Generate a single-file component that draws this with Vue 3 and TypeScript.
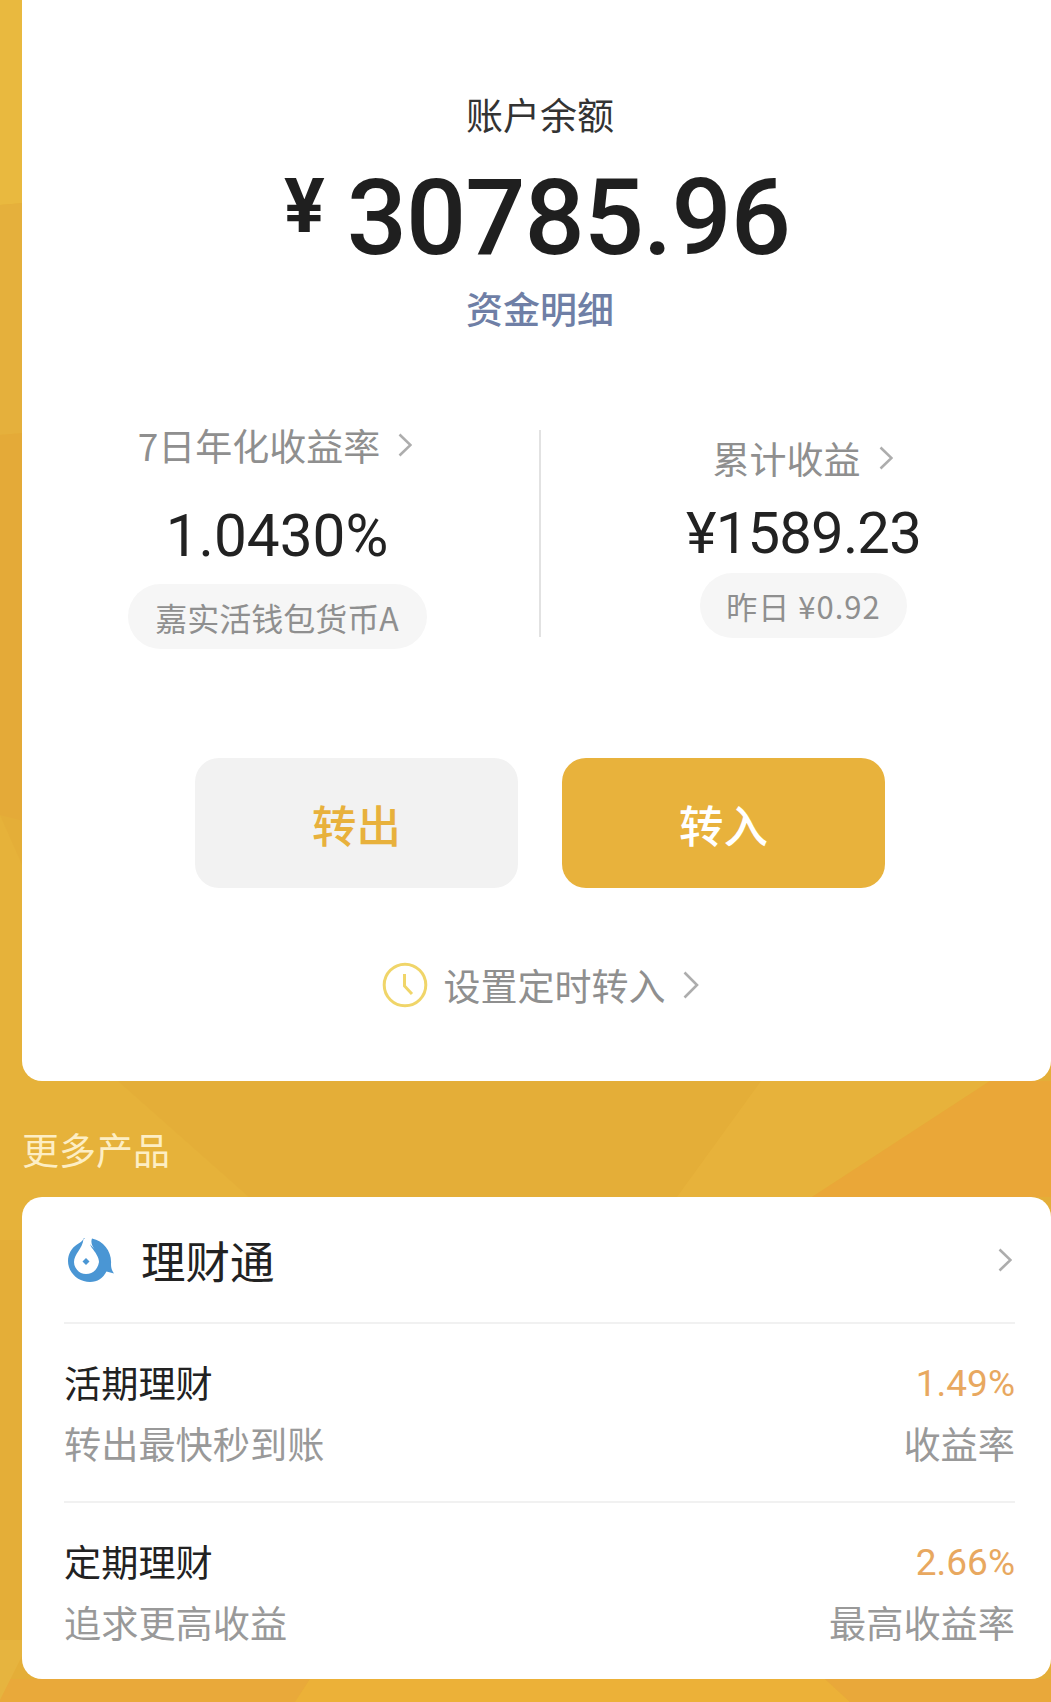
<script setup lang="ts">
interface Product {
  name: string
  desc: string
  rate: string
  rateLabel: string
}

const products: Product[] = [
  { name: '活期理财', desc: '转出最快秒到账', rate: '1.49%', rateLabel: '收益率' },
  { name: '定期理财', desc: '追求更高收益', rate: '2.66%', rateLabel: '最高收益率' },
]
</script>

<template>
  <div class="page">
    <svg class="backdrop" viewBox="0 0 1051 1702" preserveAspectRatio="none" aria-hidden="true">
      <rect width="1051" height="1702" fill="#e4ae38" />
      <polygon points="0,0 60,0 60,200 0,205" fill="#e9b93f" />
      <polygon points="0,205 60,200 60,430 0,435" fill="#e5b03c" />
      <polygon points="0,435 60,430 60,830 0,815" fill="#e4aa38" />
      <polygon points="0,815 118,1081 249,1197 249,1240 0,1240" fill="#e6b23a" />
      <polygon points="761,1081 990,1081 812,1197 677,1197" fill="#e7b23b" />
      <polygon points="990,1081 1051,1081 1051,1197 812,1197" fill="#eaa738" />
      <polygon points="0,1679 310,1679 295,1702 0,1702" fill="#e9a93a" />
      <polygon points="310,1679 825,1679 850,1702 295,1702" fill="#ecb138" />
      <polygon points="825,1679 1051,1679 1051,1702 850,1702" fill="#e9a83a" />
      <polygon points="0,1640 30,1640 0,1700" fill="#e6b43f" />
    </svg>

    <section class="balance-card">
      <div class="balance-label">账户余额</div>
      <div class="balance-amount">
        <span class="yen">¥</span>
        <span class="digits">30785.96</span>
      </div>
      <a class="details-link">资金明细</a>

      <div class="stats">
        <div class="stat stat-left">
          <div class="stat-title">
            <span>7日年化收益率</span>
            <svg class="chev" viewBox="0 0 14 24"><polyline points="1.5,1.5 12.5,12 1.5,22.5" /></svg>
          </div>
          <div class="stat-value">1.0430%</div>
          <div class="pill pill-fund">嘉实活钱包货币A</div>
        </div>
        <div class="stat-rule"></div>
        <div class="stat stat-right">
          <div class="stat-title">
            <span>累计收益</span>
            <svg class="chev" viewBox="0 0 14 24"><polyline points="1.5,1.5 12.5,12 1.5,22.5" /></svg>
          </div>
          <div class="stat-value stat-value-strong">¥1589.23</div>
          <div class="pill pill-yday">昨日 ¥0.92</div>
        </div>
      </div>

      <div class="actions">
        <button class="btn btn-out" type="button">转出</button>
        <button class="btn btn-in" type="button">转入</button>
      </div>

      <div class="schedule">
        <svg class="clock" viewBox="0 0 46 46">
          <circle cx="23" cy="23" r="20.8" />
          <polyline points="22.5,12 22.5,24 30,32" />
        </svg>
        <span class="schedule-text">设置定时转入</span>
        <svg class="chev chev-lg" viewBox="0 0 16 28"><polyline points="1.5,1.5 14,14 1.5,26.5" /></svg>
      </div>
    </section>

    <h2 class="more-title">更多产品</h2>

    <section class="product-card">
      <header class="product-head">
        <svg class="logo" viewBox="0 0 47 44">
          <path class="logo-blue" d="M16 0 C14.5 3.5 11.5 5 9 6.5 C3.5 10 0 16 0 23 C0 34.5 10 44 22 44 C29.5 44 35 40 38.5 33.5 L46 35.5 C43.5 32 43 29 43 26 C44 14 36 3 24 0.5 C22.5 4 24 8 26.5 11 Z" />
          <path class="logo-white" d="M15.5 1 L23 1 C21.5 5 22 7 24 10 C27 14 31 19 31 24 C30 31 25 36 18 36 C11 36 6 30 6 24 C6 16 14.5 11 15.5 1 Z" />
          <polygon class="logo-blue" points="18,20 21.5,23.5 18,27 14.5,23.5" />
        </svg>
        <span class="product-name">理财通</span>
        <svg class="chev chev-head" viewBox="0 0 14 24"><polyline points="1.5,1.5 12.5,12 1.5,22.5" /></svg>
      </header>

      <div v-for="p in products" :key="p.name" class="product-row">
        <div class="row-line">
          <span class="row-name">{{ p.name }}</span>
          <span class="row-rate">{{ p.rate }}</span>
        </div>
        <div class="row-line row-sub">
          <span>{{ p.desc }}</span>
          <span>{{ p.rateLabel }}</span>
        </div>
      </div>
    </section>
  </div>
</template>

<style scoped>
.page {
  position: relative;
  width: 1051px;
  height: 1702px;
  overflow: hidden;
  padding-left: 22px;
  box-sizing: border-box;
  font-family: "Noto Sans CJK SC", "Noto Sans", sans-serif;
  color: #222;
}

.backdrop {
  position: absolute;
  inset: 0;
  width: 100%;
  height: 100%;
}

.balance-card,
.more-title,
.product-card {
  position: relative;
}

.balance-card {
  height: 1081px;
  box-sizing: border-box;
  padding-top: 90px;
  background: #fff;
  border-radius: 0 0 20px 20px;
  display: flex;
  flex-direction: column;
}

.balance-label {
  height: 50px;
  line-height: 50px;
  font-size: 37px;
  text-align: center;
  color: #333;
  padding-left: 7px;
  margin-top: -1px;
  margin-bottom: 1px;
}

.balance-amount {
  display: flex;
  justify-content: center;
  align-items: flex-start;
  height: 108px;
  margin-top: 28px;
  padding-left: 1px;
  font-family: "Roboto", sans-serif;
  color: #1f1f1f;
}

.yen {
  font-size: 76px;
  line-height: 76px;
  font-weight: 700;
  margin-right: 22px;
}

.digits {
  font-size: 106px;
  line-height: 100px;
  font-weight: 500;
  letter-spacing: -1px;
}

.details-link {
  display: block;
  height: 50px;
  line-height: 50px;
  margin-top: 7px;
  padding-left: 7px;
  font-size: 37px;
  font-weight: 500;
  text-align: center;
  color: #6f7fa6;
}

.stats {
  display: grid;
  grid-template-columns: 510px 2px 1fr;
  column-gap: 10px;
  margin-top: 97px;
  height: 207px;
}

.stat {
  display: flex;
  flex-direction: column;
  align-items: center;
}

.stat-right {
  padding-left: 2px;
}

.stat-rule {
  width: 2px;
  height: 207px;
  margin-left: -3px;
  background: #e2e2e2;
}

.stat-title {
  display: flex;
  align-items: center;
  gap: 18px;
  height: 50px;
  line-height: 50px;
  font-size: 37px;
  color: #8f8f8f;
}

.stat-left .stat-title {
  margin-top: -10px;
  margin-right: 4px;
}

.stat-right .stat-title {
  margin-top: 3px;
  margin-right: 2px;
}

.stat-value {
  font-family: "Roboto", sans-serif;
  font-size: 58.5px;
  line-height: 70px;
  margin-top: 31px;
  color: #222;
}

.stat-right .stat-value {
  margin-top: 15px;
}

.stat-value-strong {
  font-size: 58px;
  letter-spacing: -0.8px;
}

.pill {
  border-radius: 33px;
  background: #f6f6f6;
  color: #8f8f8f;
  display: flex;
  align-items: center;
  justify-content: center;
  box-sizing: border-box;
}

.pill-fund {
  width: 299px;
  height: 65px;
  margin-top: 13px;
  font-size: 32px;
}

.pill-yday {
  width: 207px;
  height: 65px;
  margin-top: 5px;
  font-size: 31px;
  letter-spacing: 1px;
}

.chev {
  width: 14px;
  height: 24px;
  flex: none;
}

.chev polyline {
  fill: none;
  stroke: #adadad;
  stroke-width: 2.6;
}

.chev-lg {
  width: 16px;
  height: 28px;
  margin-left: 17px;
}

.actions {
  display: flex;
  justify-content: center;
  gap: 44px;
  margin-top: 121px;
  padding-left: 7px;
}

.btn {
  width: 323px;
  height: 130px;
  border: none;
  border-radius: 24px;
  font-family: inherit;
  font-size: 44.5px;
  font-weight: 500;
  padding: 0;
}

.btn-out {
  background: #f2f2f2;
  color: #e8b13c;
}

.btn-in {
  background: #e8b23c;
  color: #fff;
}

.schedule {
  display: flex;
  align-items: center;
  justify-content: center;
  margin-top: 72px;
  padding-left: 7px;
  height: 50px;
}

.clock {
  width: 46px;
  height: 46px;
  margin-right: 16px;
}

.clock circle,
.clock polyline {
  fill: none;
  stroke: #f0d569;
  stroke-width: 3;
}

.schedule-text {
  font-size: 37px;
  line-height: 50px;
  color: #8f8f8f;
}

.more-title {
  margin: 0;
  padding-top: 43px;
  height: 116px;
  box-sizing: border-box;
  font-size: 37px;
  font-weight: 400;
  line-height: 50px;
  color: #fdeec4;
}

.product-card {
  height: 482px;
  box-sizing: border-box;
  padding: 0 36px 0 42px;
  background: #fff;
  border-radius: 20px;
}

.product-head {
  display: flex;
  align-items: center;
  height: 125px;
}

.logo {
  width: 47px;
  height: 44px;
  margin-left: 4px;
}

.logo-blue {
  fill: #4a96d4;
}

.logo-white {
  fill: #fff;
}

.product-name {
  margin-left: 26px;
  font-size: 44.5px;
  line-height: 60px;
  color: #222;
}

.chev-head {
  margin-left: auto;
  margin-right: 3px;
}

.product-row {
  border-top: 2px solid #f1f1f1;
  height: 179px;
  box-sizing: border-box;
  padding-top: 33px;
}

.row-line {
  display: flex;
  justify-content: space-between;
  align-items: center;
  height: 50px;
  line-height: 50px;
  font-size: 37.2px;
}

.row-name {
  color: #222;
}

.row-rate {
  font-family: "Roboto", sans-serif;
  font-size: 37px;
  padding-top: 4px;
  color: #e8a860;
}

.row-sub {
  margin-top: 11px;
  color: #999;
}
</style>
